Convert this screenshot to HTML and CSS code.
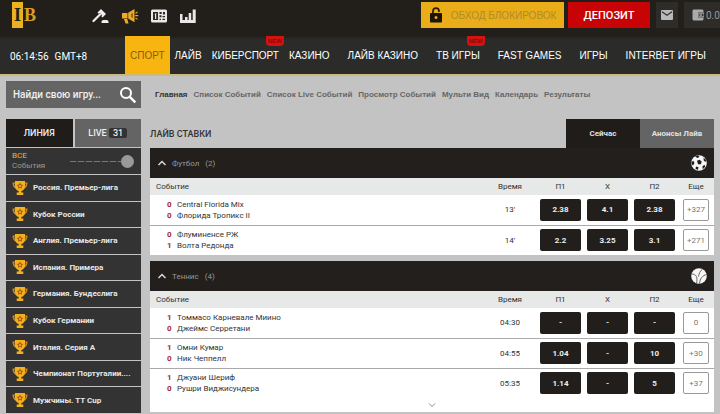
FILE: index.html
```
<!DOCTYPE html>
<html lang="ru">
<head>
  <meta charset="UTF-8">
  <meta name="viewport" content="width=device-width, initial-scale=1.0">
  <title>Лайв ставки</title>
  <link rel="stylesheet" href="styles.css">
</head>
<body>
  <!-- shared icons -->
  <svg class="sprite" aria-hidden="true">
    <symbol id="cup" viewBox="0 0 16 16">
      <path d="M.5 2.500h3.500v1.300H2.100c.1 2 1.200 3.300 2.800 3.800v1.300C2.300 8.500.5 6.500.5 2.500zM15.500 2.500H12v1.300h1.900c-.1 2-1.200 3.300-2.800 3.800v1.300c2.600-.4 4.400-2.400 4.400-6.400z" fill="#c98a1c"/>
      <path d="M3 1h10v5c0 2.800-1.600 4.500-3.700 5v1.500h2V15H4.700v-2.500h2V11C4.600 10.500 3 8.800 3 6z" fill="#f3b021"/>
      <path d="M8 2.600l1.100 2 2.200.4-1.600 1.600.3 2.200-2-1-2 1 .3-2.200L4.700 5l2.200-.4z" fill="#a85c10"/>
      <circle cx="8" cy="6" r="1.100" fill="#f3b021"/>
    </symbol>
    <symbol id="up" viewBox="0 0 10 10">
      <path d="M1.500 7L5 3.500 8.500 7" fill="none" stroke="#d8d8d8" stroke-width="1.500"/>
    </symbol>
  </svg>

  <header class="topbar">
    <a class="logo" href="#" aria-label="IB">
      <span class="logo-i">I</span><span class="logo-b">B</span>
    </a>
    <nav class="tools">
      <a href="#" aria-label="Ставки">
        <svg viewBox="0 0 18 16"><path d="M1.500 13L8 6.500" stroke="#eee" stroke-width="2.200" stroke-linecap="round"/><path d="M5.500 4.500L9 1l5 5-3.500 3.500-1.200-1.200.8-1L7.800 5l-1.200.7z" fill="#eee"/><path d="M9.500 15v-1c0-1.200.8-2 2-2h3c1.200 0 2 .8 2 2v1z" fill="#eee"/></svg>
      </a>
      <a href="#" aria-label="Акции">
        <svg viewBox="0 0 18 16"><path d="M1 5h5.500v5.500H1zM7.200 4.800L13.500 1v13.200l-6.300-3.700zM3 11h3.300l1.200 4.500H4.500zM14.500 4.500l2-1v1.500l-2 .8zM14.500 9.500l2 1v1.300l-2-1zM14.200 7h3v1.200h-3z" fill="#eeab25"/><path d="M10 6l2-1.200v5.400L10 9z" fill="#94671b"/></svg>
      </a>
      <a href="#" aria-label="Новости">
        <svg viewBox="0 0 18 16"><rect x="1" y="1.500" width="16" height="13" rx="1.500" fill="#e8e8e8"/><path d="M3 4h5v8H3zM9.500 4h2.200v2H9.500zM13 4h2v2.500h-2zM9.500 7.300h2v2h-2zM12.500 8H15v1.300h-2.500zM9.500 10.700h1.500V12H9.500zM12.500 10.700H15V12h-2.500z" fill="#2c2924"/><path d="M4.500 6l1.700-1v6H5V6.700z" fill="#e8e8e8"/></svg>
      </a>
      <a href="#" aria-label="Статистика">
        <svg viewBox="0 0 18 16"><path d="M1 6h2.500v6H6V9h2.500v3h1.200V5h2.500v7h1.500V1.500h3V15H1z" fill="#e8e8e8"/></svg>
      </a>
    </nav>
    <div class="account">
      <button class="btn btn-unblock" type="button">
        <svg viewBox="0 0 14 16"><path d="M4 7V4.200a3 3 0 0 1 6 0V5" fill="none" stroke="#2b1d05" stroke-width="1.700"/><rect x="1" y="6" width="12" height="9.500" rx="1" fill="#1d1406"/><circle cx="7" cy="10.600" r="1.500" fill="#e8ab1b"/></svg>
        ОБХОД БЛОКИРОВОК
      </button>
      <button class="btn btn-deposit" type="button">ДЕПОЗИТ</button>
      <button class="btn btn-mail" type="button" aria-label="Сообщения">
        <svg viewBox="0 0 12 10"><rect width="12" height="10" rx="1" fill="#b9b9b9"/><path d="M1 1.800l5 3.500 5-3.500" fill="none" stroke="#33312e" stroke-width="1.300"/></svg>
      </button>
      <button class="btn btn-wallet" type="button">
        <svg viewBox="0 0 12 12"><path d="M1.500.5h9l1 1v2H6v5h5.500v2l-1 1h-9l-1-1v-9z" fill="#aaa"/><path d="M6.800 4.200H12v3.600H6.800z" fill="none" stroke="#aaa"/><circle cx="9" cy="6" r="1" fill="#aaa"/></svg>
        0.0
      </button>
    </div>
  </header>

  <div class="navbar">
    <div class="clock"><span>06:14:56</span><span>GMT+8</span></div>
    <nav class="menu">
      <a class="active" href="#">СПОРТ</a>
      <a href="#">ЛАЙВ</a>
      <a href="#">КИБЕРСПОРТ<span class="new">NEW</span></a>
      <a href="#">КАЗИНО</a>
      <a class="wide" href="#">ЛАЙВ КАЗИНО</a>
      <a class="wide" href="#">ТВ ИГРЫ<span class="new">NEW</span></a>
      <a class="wide" href="#">FAST GAMES</a>
      <a class="wide" href="#">ИГРЫ</a>
      <a class="wide" href="#">INTERBET ИГРЫ</a>
    </nav>
  </div>

  <div class="page">
    <aside class="sidebar">
      <form class="search">
        <input type="text" placeholder="Найди свою игру..." aria-label="Найди свою игру">
        <button type="button" aria-label="Поиск">
          <svg viewBox="0 0 18 18"><circle cx="7" cy="7" r="5" fill="none" stroke="#fff" stroke-width="2"/><path d="M10.800 10.800l5.500 5.500" stroke="#fff" stroke-width="2.400"/></svg>
        </button>
      </form>
      <div class="side-tabs">
        <button class="active" type="button">ЛИНИЯ</button>
        <button type="button">LIVE <span class="count">31</span></button>
      </div>
      <div class="period">
        <label for="period"><b>ВСЕ</b>События</label>
        <input id="period" type="range" min="0" max="6" value="6">
      </div>
      <ul class="leagues">
        <li><a href="#"><svg><use href="#cup"/></svg>Россия. Премьер-лига</a></li>
        <li><a href="#"><svg><use href="#cup"/></svg>Кубок России</a></li>
        <li><a href="#"><svg><use href="#cup"/></svg>Англия. Премьер-лига</a></li>
        <li><a href="#"><svg><use href="#cup"/></svg>Испания. Примера</a></li>
        <li><a href="#"><svg><use href="#cup"/></svg>Германия. Бундеслига</a></li>
        <li><a href="#"><svg><use href="#cup"/></svg>Кубок Германии</a></li>
        <li><a href="#"><svg><use href="#cup"/></svg>Италия. Серия А</a></li>
        <li><a href="#"><svg><use href="#cup"/></svg>Чемпионат Португалии....</a></li>
        <li><a href="#"><svg><use href="#cup"/></svg>Мужчины. TT Cup</a></li>
      </ul>
    </aside>

    <main class="content">
      <nav class="crumbs">
        <a class="active" href="#">Главная</a>
        <a href="#">Список Событий</a>
        <a href="#">Список Live Событий</a>
        <a href="#">Просмотр Событий</a>
        <a href="#">Мульти Вид</a>
        <a href="#">Календарь</a>
        <a href="#">Результаты</a>
      </nav>
      <div class="title-row">
        <h1>ЛАЙВ СТАВКИ</h1>
        <div class="tabs">
          <button class="active" type="button">Сейчас</button>
          <button type="button">Анонсы Лайв</button>
        </div>
      </div>

      <section class="sport">
        <h2>
          <svg class="arrow"><use href="#up"/></svg>Футбол<span>(2)</span>
          <svg class="ball" viewBox="0 0 16 16"><circle cx="8" cy="8" r="7.800" fill="#f6f6f6"/><path d="M6 5.800l2.500-1 2.200 1.700-.8 2.700H7zM4 1.600l3-1 1.500 1.200-2 1.300zM.5 7l1.800-1.300L3.500 8 2 10.500l-1.200-1zM12.500 2.500l2.500 2.500-.3 2-1.900-1.200zM5 11.500l2.500.8-.5 2.500-2.500-.8zM11.500 11l2.300-1 .4 1.800-2.500 2.400z" fill="#1e1b19"/></svg>
        </h2>
        <table>
          <thead>
            <tr><th class="event">Событие</th><th class="time">Время</th><th class="odd">П1</th><th class="odd">X</th><th class="odd">П2</th><th class="more">Еще</th></tr>
          </thead>
          <tbody>
            <tr>
              <td class="event"><div><b>0</b>Central Florida Mix</div><div><b>0</b>Флорида Тропикс II</div></td>
              <td>13'</td>
              <td><button class="bet" type="button">2.38</button></td>
              <td><button class="bet" type="button">4.1</button></td>
              <td><button class="bet" type="button">2.38</button></td>
              <td><button class="plus" type="button">+327</button></td>
            </tr>
            <tr>
              <td class="event"><div><b>0</b>Флуминенсе РЖ</div><div><b>1</b>Волта Редонда</div></td>
              <td>14'</td>
              <td><button class="bet" type="button">2.2</button></td>
              <td><button class="bet" type="button">3.25</button></td>
              <td><button class="bet" type="button">3.1</button></td>
              <td><button class="plus" type="button">+271</button></td>
            </tr>
          </tbody>
        </table>
      </section>

      <section class="sport">
        <h2>
          <svg class="arrow"><use href="#up"/></svg>Теннис<span>(4)</span>
          <svg class="ball" viewBox="0 0 16 16"><circle cx="8" cy="8" r="7.800" fill="#f6f6f6"/><path d="M.8 6C5 6 7 9 5.500 15.300M7.500 8.500C8 5.500 9 3 11.500 1.200M15.500 6.500C11.500 7.500 9 10.500 8.500 15.500" fill="none" stroke="#56534f" stroke-width=".9"/></svg>
        </h2>
        <table>
          <thead>
            <tr><th class="event">Событие</th><th class="time">Время</th><th class="odd">П1</th><th class="odd">X</th><th class="odd">П2</th><th class="more">Еще</th></tr>
          </thead>
          <tbody>
            <tr>
              <td class="event"><div><b>1</b>Томмасо Карневале Миино</div><div><b>0</b>Джеймс Серретани</div></td>
              <td>04:30</td>
              <td><button class="bet" type="button">-</button></td>
              <td><button class="bet" type="button">-</button></td>
              <td><button class="bet" type="button">-</button></td>
              <td><button class="plus" type="button">0</button></td>
            </tr>
            <tr>
              <td class="event"><div><b>1</b>Омни Кумар</div><div><b>0</b>Ник Чеппелл</div></td>
              <td>04:55</td>
              <td><button class="bet" type="button">1.04</button></td>
              <td><button class="bet" type="button">-</button></td>
              <td><button class="bet" type="button">10</button></td>
              <td><button class="plus" type="button">+30</button></td>
            </tr>
            <tr>
              <td class="event"><div><b>1</b>Джуани Шериф</div><div><b>0</b>Рушри Виджисундера</div></td>
              <td>05:35</td>
              <td><button class="bet" type="button">1.14</button></td>
              <td><button class="bet" type="button">-</button></td>
              <td><button class="bet" type="button">5</button></td>
              <td><button class="plus" type="button">+37</button></td>
            </tr>
          </tbody>
        </table>
        <button class="show-more" type="button" aria-label="Показать еще">
          <svg viewBox="0 0 10 10"><path d="M2 3.500l3 3 3-3" fill="none" stroke="#888"/></svg>
        </button>
      </section>
    </main>
  </div>
</body>
</html>
```

FILE: styles.css
```
* { box-sizing: border-box; }
body {
  margin: 0;
  min-height: 100vh;
  display: flex;
  flex-direction: column;
  overflow-x: hidden;
  background: #c3c3c3;
  color: #333;
  font-family: Roboto, "Liberation Sans", sans-serif;
  font-size: 9px;
}
a { color: inherit; text-decoration: none; }
button {
  margin: 0;
  padding: 0;
  border: none;
  background: none;
  color: inherit;
  font: inherit;
  cursor: pointer;
}
.sprite {
  position: absolute;
  width: 0;
  height: 0;
}

/* top bar */
.topbar {
  display: flex;
  align-items: flex-start;
  height: 36px;
  padding: 2px 0 0 12px;
  background: #221f1b;
}
.logo {
  display: flex;
  align-items: center;
  width: 80px;
  font-family: "Liberation Serif", serif;
  font-size: 18px;
  font-weight: bold;
  line-height: 26px;
}
.logo-i {
  width: 11px;
  background: #edb021;
  color: #221f1b;
  text-align: center;
}
.logo-b {
  padding-left: 1px;
  color: #d99e22;
}
.tools {
  display: flex;
  gap: 11px;
  padding-top: 6px;
}
.tools svg {
  display: block;
  width: 18px;
  height: 16px;
}
.account {
  display: flex;
  gap: 4px;
  margin-left: auto;
}
.btn {
  display: flex;
  align-items: center;
  justify-content: center;
  height: 26px;
  font-size: 11px;
}
.btn-unblock {
  gap: 8px;
  width: 143px;
  background: #e8ad18;
  color: #b08a30;
  font-family: "Liberation Sans", sans-serif;
  font-size: 10px;
}
.btn-unblock svg { width: 14px; height: 16px; }
.btn-deposit {
  width: 82px;
  background: #c80306;
  color: #fff;
  font-weight: 500;
}
.btn-mail {
  width: 22px;
  margin-left: 2px;
  background: #2e2c29;
}
.btn-mail svg { width: 12px; height: 10px; }
.btn-wallet {
  justify-content: flex-start;
  gap: 2px;
  width: 36px;
  margin-left: 2px;
  padding-left: 8px;
  background: #2e2c29;
  color: #999;
  font-size: 10px;
}
.btn-wallet svg { flex: none; width: 12px; height: 12px; }

/* main menu */
.navbar {
  display: flex;
  height: 40px;
  border-bottom: 2px solid #cdb97c;
  background: linear-gradient(#211f1c, #2b2c2a 4px);
  color: #fff;
  font-family: "Liberation Sans", sans-serif;
  font-size: 10px;
}
.clock {
  flex: none;
  display: flex;
  align-items: center;
  gap: 6px;
  width: 125px;
  padding: 3px 0 0 10px;
  font-family: Roboto, sans-serif;
}
.menu { display: flex; }
.menu a {
  position: relative;
  display: flex;
  align-items: center;
  padding: 0 5px;
  white-space: nowrap;
}
.menu .wide { margin-left: 8px; }
.menu .active {
  background: #f8b50f;
  color: #7f5e17;
}
.new {
  position: absolute;
  top: 0;
  right: 0;
  padding: 0 2px;
  border-radius: 0 0 4px 4px;
  background: #d3130f;
  color: #8c0a0a;
  font-size: 6px;
  font-weight: bold;
  line-height: 10px;
}

.page {
  flex: 1;
  display: flex;
  gap: 9px;
  padding: 5px 6px 1px;
}

/* sidebar */
.sidebar {
  display: flex;
  flex-direction: column;
  width: 135px;
}
.search {
  display: flex;
  align-items: center;
  height: 27px;
  margin-bottom: 11px;
  padding: 0 4px 0 7px;
  background: #646464;
}
.search input {
  flex: 1;
  min-width: 0;
  padding: 0;
  border: none;
  background: none;
  color: #fff;
  font: 500 10px Roboto, sans-serif;
}
.search input::placeholder { color: #f0f0f0; }
.search svg {
  display: block;
  width: 18px;
  height: 18px;
}
.side-tabs {
  display: flex;
  gap: 2px;
  height: 28px;
  margin-bottom: 1px;
}
.side-tabs button {
  flex: 1;
  background: #646464;
  color: #eee;
  font-weight: 500;
}
.side-tabs .active { background: #1f1c1a; }
.count {
  display: inline-block;
  padding: 0 4px;
  border-radius: 2px;
  background: #333;
  line-height: 10px;
}
.period {
  display: flex;
  align-items: center;
  justify-content: space-between;
  height: 26px;
  margin-bottom: 1px;
  padding: 0 7px 0 6px;
  background: #333;
  color: #999;
  line-height: 10px;
}
.period label { font-size: 8px; }
.period b {
  display: block;
  color: #d69f2b;
  font-weight: 500;
}
.period input {
  width: 64px;
  height: 14px;
  margin: 0;
  appearance: none;
  background: repeating-linear-gradient(90deg, #777 0 6px, #444 6px 8px) center / 100% 1px no-repeat;
}
.period input::-webkit-slider-thumb {
  appearance: none;
  width: 13px;
  height: 13px;
  border-radius: 50%;
  background: #999;
}
.leagues {
  flex: 1;
  display: grid;
  grid-auto-rows: 1fr;
  gap: 1px;
  margin: 0;
  padding: 0;
  list-style: none;
}
.leagues li {
  display: flex;
  background: #333;
}
.leagues a {
  flex: 1;
  display: flex;
  align-items: center;
  gap: 5px;
  padding: 0 6px;
  color: #e8e8e8;
  font-size: 8px;
  font-weight: bold;
  white-space: nowrap;
}
.leagues svg {
  flex: none;
  width: 16px;
  height: 16px;
}

/* content */
.content {
  flex: 1;
  min-width: 0;
}
.crumbs {
  display: flex;
  align-items: center;
  gap: 6px;
  height: 27px;
  margin-bottom: 11px;
  padding-left: 5px;
  color: #666;
  font-family: "Liberation Sans", sans-serif;
  font-size: 8px;
  font-weight: bold;
  white-space: nowrap;
}
.crumbs .active { color: #333; }
.title-row {
  display: flex;
  align-items: center;
  justify-content: space-between;
  height: 29px;
}
h1 {
  margin: 0;
  color: #333;
  font-size: 9px;
  font-weight: 500;
}
.tabs {
  display: flex;
  align-self: stretch;
}
.tabs button {
  width: 74px;
  background: #646464;
  color: #e0e0e0;
  font-size: 8px;
  font-weight: bold;
}
.tabs .active { background: #1f1c1a; }

.sport {
  margin-bottom: 6px;
  background: #fff;
}
.sport:last-child { margin-bottom: 0; }
h2 {
  display: flex;
  align-items: center;
  height: 30px;
  margin: 0;
  padding: 0 7px;
  background: #221f1c;
  color: #999;
  font-size: 8px;
  font-weight: normal;
}
h2 span { margin-left: 6px; }
.arrow {
  width: 10px;
  height: 10px;
  margin-right: 5px;
}
.ball {
  width: 16px;
  height: 16px;
  margin-left: auto;
}
table {
  width: 100%;
  table-layout: fixed;
  border-collapse: collapse;
}
th {
  height: 17px;
  padding: 0;
  background: #e7e8e8;
  font-size: 8px;
  font-weight: normal;
}
th.event {
  padding-left: 6px;
  text-align: left;
}
th.time { width: 54px; }
th.odd { width: 47px; }
th.more { width: 36px; }
td {
  height: 30px;
  padding: 0;
  border-bottom: 1px solid #aaa;
  font-size: 8px;
  text-align: center;
}
tbody tr:last-child td { border-bottom: none; }
td.event {
  padding-left: 17px;
  line-height: 11px;
  text-align: left;
}
td.event b {
  display: inline-block;
  width: 10px;
  color: #a3272d;
}
.bet {
  width: 41px;
  height: 22px;
  border-radius: 2px;
  background: #211e1b;
  color: #eee;
  font-weight: bold;
}
.plus {
  width: 26px;
  height: 22px;
  border: 1px solid #999;
  border-radius: 2px;
  color: #777;
}
.show-more {
  display: block;
  width: 100%;
  height: 14px;
}
.show-more svg {
  display: block;
  width: 10px;
  height: 10px;
  margin: 0 auto;
}
```
